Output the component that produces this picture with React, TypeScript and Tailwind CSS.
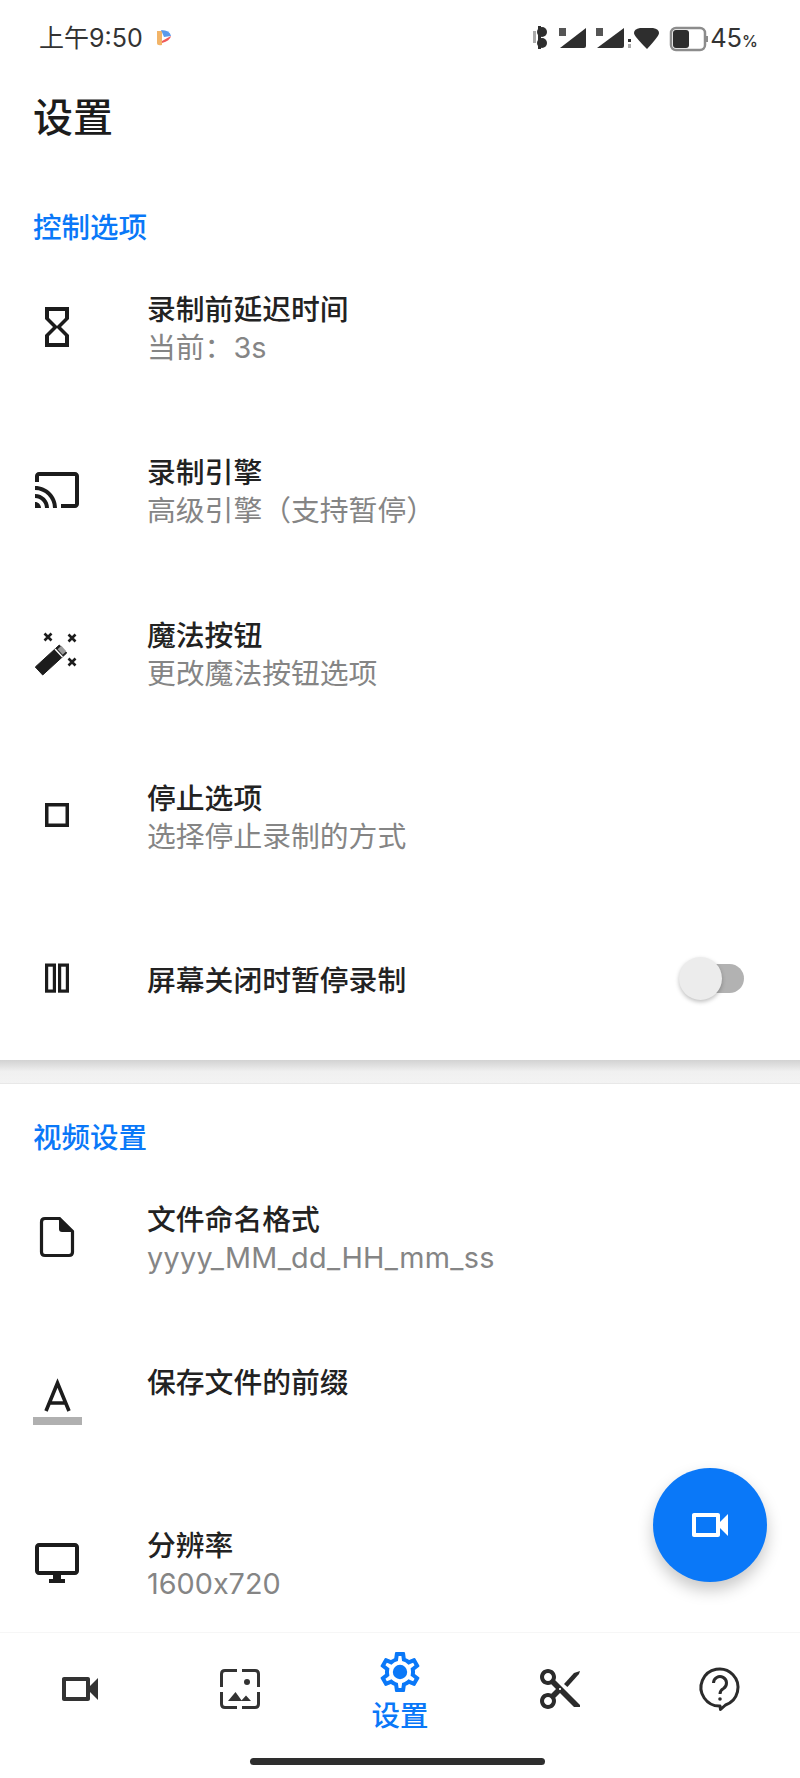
import type { ReactNode } from 'react'

const FONT = 'font-["Inter","Noto_Sans_CJK_SC",sans-serif]'

function Icon({ children, fill = '#1c1c1c' }: { children: ReactNode; fill?: string }) {
    return (
        <svg width="48" height="48" viewBox="0 0 24 24" fill={fill}>
            {children}
        </svg>
    )
}

const VIDEOCAM =
    'M15 8v8H5V8h10m1-2H4c-.55 0-1 .45-1 1v10c0 .55.45 1 1 1h12c.55 0 1-.45 1-1v-3.5l4 4v-11l-4 4V7c0-.55-.45-1-1-1z'

const HourglassIcon = () => (
    <Icon>
        <path d="M6 2v6h.01L6 8.01 10 12l-4 4 .01.01H6V22h12v-5.99h-.01L18 16l-4-4 4-3.99-.01-.01H18V2H6zm10 14.5V20H8v-3.5l4-4 4 4zm-4-5l-4-4V4h8v3.5l-4 4z" />
    </Icon>
)

const CastIcon = () => (
    <Icon>
        <path d="M21 3H3c-1.1 0-2 .9-2 2v3h2V5h18v14h-7v2h7c1.1 0 2-.9 2-2V5c0-1.1-.9-2-2-2zM1 18v3h3c0-1.66-1.34-3-3-3zm0-4v2c2.76 0 5 2.24 5 5h2c0-3.87-3.13-7-7-7zm0-4v2c4.97 0 9 4.03 9 9h2c0-6.08-4.93-11-11-11z" />
    </Icon>
)

const WandIcon = () => (
    <svg width="48" height="48" viewBox="0 0 48 48" fill="none">
        <path d="M2.3 38 L26.3 16 L33.7 24 L9.7 46 Z" fill="#1c1c1c" stroke="#1c1c1c" strokeWidth="1" strokeLinejoin="round" />
        <path d="M22 20 L29.5 28" stroke="#fff" strokeWidth="1.4" />
        <path d="M26.5 18.5 L31.5 24" stroke="#999" strokeWidth="5" />
        <g stroke="#1c1c1c" strokeWidth="2.6">
            <path d="M11.5 4.5 L18.5 11.5 M18.5 4.5 L11.5 11.5" />
            <path d="M35.5 5.5 L42.5 12.5 M42.5 5.5 L35.5 12.5" />
            <path d="M35.5 29.5 L42.5 36.5 M42.5 29.5 L35.5 36.5" />
        </g>
    </svg>
)

const StopIcon = () => (
    <svg width="48" height="48" viewBox="0 0 48 48" fill="none">
        <rect x="13.75" y="12.75" width="20.5" height="20.5" stroke="#1c1c1c" strokeWidth="3.5" />
    </svg>
)

const PauseIcon = () => (
    <svg width="48" height="48" viewBox="0 0 48 48" fill="none" stroke="#1c1c1c" strokeWidth="3.2">
        <rect x="13.6" y="10.1" width="7.8" height="26" />
        <rect x="26.6" y="10.1" width="7.8" height="26" />
    </svg>
)

const FileIcon = () => (
    <svg width="48" height="48" viewBox="0 0 48 48" fill="none">
        <path d="M12 5.5 H26.5 L39.5 18.5 V39 Q39.5 42.5 36 42.5 H12 Q8.5 42.5 8.5 39 V9 Q8.5 5.5 12 5.5 Z" stroke="#1c1c1c" strokeWidth="3.2" />
        <path d="M26 5 L40 19 H29 Q26 19 26 16 Z" fill="#1c1c1c" />
    </svg>
)

const LetterIcon = () => (
    <svg width="48" height="48" viewBox="0 0 48 48" fill="none" className="overflow-visible">
        <path d="M13 35 L24.5 7 L36 35 M17 27 H32" stroke="#1c1c1c" strokeWidth="3.6" />
        <rect x="0" y="41" width="49" height="8" fill="#b0b0b0" />
    </svg>
)

const DesktopIcon = () => (
    <Icon>
        <path d="M21 2H3c-1.1 0-2 .9-2 2v12c0 1.1.9 2 2 2h7v2H8v2h8v-2h-2v-2h7c1.1 0 2-.9 2-2V4c0-1.1-.9-2-2-2zm0 14H3V4h18v12z" />
    </Icon>
)

const GalleryIcon = () => (
    <svg width="48" height="48" viewBox="0 0 48 48" fill="none">
        <path
            d="M21 5.5 H9 Q5.5 5.5 5.5 9 V22 M26 5.5 H39 Q42.5 5.5 42.5 9 V22 M5.5 27 V39 Q5.5 42.5 9 42.5 H21 M42.5 27 V39 Q42.5 42.5 39 42.5 H26"
            stroke="#333"
            strokeWidth="3"
        />
        <circle cx="31" cy="17" r="3" fill="#333" />
        <path d="M12 36 L19.5 27 L26 36 Z M25 36 L30 30.5 L35 36 Z" fill="#333" />
    </svg>
)

const GearIcon = () => (
    <Icon fill="#0a78f8">
        <path d="M19.43 12.98c.04-.32.07-.64.07-.98 0-.34-.03-.66-.07-.98l2.11-1.65c.19-.15.24-.42.12-.64l-2-3.46c-.09-.16-.26-.25-.44-.25-.06 0-.12.01-.17.03l-2.49 1c-.52-.4-1.08-.73-1.69-.98l-.38-2.65C14.46 2.18 14.25 2 14 2h-4c-.25 0-.46.18-.49.42l-.38 2.65c-.61.25-1.17.59-1.69.98l-2.49-1c-.06-.02-.12-.03-.18-.03-.17 0-.34.09-.43.25l-2 3.46c-.13.22-.07.49.12.64l2.11 1.65c-.04.32-.07.65-.07.98 0 .33.03.66.07.98l-2.11 1.65c-.19.15-.24.42-.12.64l2 3.46c.09.16.26.25.44.25.06 0 .12-.01.17-.03l2.49-1c.52.4 1.08.73 1.69.98l.38 2.65c.03.24.24.42.49.42h4c.25 0 .46-.18.49-.42l.38-2.65c.61-.25 1.17-.59 1.69-.98l2.49 1c.06.02.12.03.18.03.17 0 .34-.09.43-.25l2-3.46c.12-.22.07-.49-.12-.64l-2.11-1.65zm-1.98-1.71c.04.31.05.52.05.73 0 .21-.02.43-.05.73l-.14 1.13.89.7 1.08.84-.7 1.21-1.27-.51-1.04-.42-.9.68c-.43.32-.84.56-1.25.73l-1.06.43-.16 1.13-.2 1.35h-1.4l-.19-1.35-.16-1.13-1.06-.43c-.43-.18-.83-.41-1.23-.71l-.91-.7-1.06.43-1.27.51-.7-1.21 1.08-.84.89-.7-.14-1.13c-.03-.31-.05-.54-.05-.74s.02-.43.05-.73l.14-1.13-.89-.7-1.08-.84.7-1.21 1.27.51 1.04.42.9-.68c.43-.32.84-.56 1.25-.73l1.06-.43.16-1.13.2-1.35h1.39l.19 1.35.16 1.13 1.06.43c.43.18.83.41 1.23.71l.91.7 1.06-.43 1.27-.51.7 1.21-1.07.85-.89.7.14 1.13z" />
        <circle cx="12" cy="12" r="3.6" />
    </Icon>
)

const ScissorsIcon = () => (
    <Icon fill="#2b2b2b">
        <path d="M9.64 7.64c.23-.5.36-1.05.36-1.64 0-2.21-1.79-4-4-4S2 3.79 2 6s1.79 4 4 4c.59 0 1.14-.13 1.64-.36L10 12l-2.36 2.36C7.14 14.13 6.59 14 6 14c-2.21 0-4 1.79-4 4s1.79 4 4 4 4-1.79 4-4c0-.59-.13-1.14-.36-1.64L12 14l7 7h3v-1L9.64 7.64zM6 8c-1.1 0-2-.89-2-2s.9-2 2-2 2 .89 2 2-.9 2-2 2zm0 12c-1.1 0-2-.89-2-2s.9-2 2-2 2 .89 2 2-.9 2-2 2zm6-7.5c-.28 0-.5-.22-.5-.5s.22-.5.5-.5.5.22.5.5-.22.5-.5.5z" />
        <path d="M14 9.5l5-5.5 3-1-.5 1.5-5.8 6.5z" />
    </Icon>
)

const HelpIcon = () => (
    <svg width="48" height="48" viewBox="0 0 48 48" fill="none" stroke="#2b2b2b" strokeWidth="3">
        <path d="M24 41 A18.5 18.5 0 1 1 29.5 40 L24.5 44.5 Z" strokeLinejoin="round" />
        <path d="M17.5 18 A6.5 6.5 0 1 1 27.5 23.5 Q24 25.5 24 29" strokeWidth="3" />
        <circle cx="24" cy="34" r="1.8" fill="#2b2b2b" stroke="none" />
    </svg>
)

function StatusIcons() {
    return (
        <svg width="176" height="30" viewBox="0 0 176 30">
            <g fill="#2e2e2e">
                <rect x="1" y="8" width="3" height="12" fill="#aaa" />
                <rect x="6" y="3" width="3" height="23" />
                <circle cx="10" cy="9" r="5" />
                <circle cx="10" cy="20" r="5" />
                <path d="M28 25 L54 5 V23 Q54 25 52 25 Z" />
                <rect x="27" y="5" width="7" height="8" fill="#555" />
                <path d="M65 25 L92 5 V23 Q92 25 90 25 Z" />
                <rect x="64" y="5" width="7" height="8" fill="#555" />
                <rect x="96" y="16" width="3" height="3" />
                <rect x="96" y="21" width="3" height="4" fill="#aaa" />
                <path d="M102 10 Q102 6 108 5 H121 Q127 6 127 10 Q127 13 115 26 Q102 13 102 10 Z" />
                <rect x="139" y="5" width="34" height="22" rx="5" fill="none" stroke="#8c8c8c" strokeWidth="2.5" />
                <rect x="141" y="7" width="16" height="18" rx="3" />
                <rect x="174" y="13" width="2" height="6" fill="#8c8c8c" />
            </g>
        </svg>
    )
}

function AppDot() {
    return (
        <svg width="16" height="18" viewBox="0 0 16 18">
            <path d="M1 2 H6 V16 Q1 17 1 14 Z" fill="#f2b468" />
            <path d="M5 1 Q14 1 15 7 L8 8 Z" fill="#5b9bec" />
            <path d="M6 12 L15 7 Q14 12 6 14 Z" fill="#ef5a5a" />
        </svg>
    )
}

function SectionTitle({ children, className }: { children: ReactNode; className: string }) {
    return (
        <div className={`flex items-end px-[33px] ${className}`}>
            <span className="text-[28.5px] leading-[34px] font-medium text-[#0a78f8]">{children}</span>
        </div>
    )
}

function Row({
    icon,
    title,
    summary,
    summaryClass = '',
    right,
}: {
    icon: ReactNode
    title: string
    summary?: string
    summaryClass?: string
    right?: ReactNode
}) {
    return (
        <div className="flex h-[163px] shrink-0 items-center pl-[33px]">
            <div className="flex w-[114px] shrink-0">{icon}</div>
            <div className="flex-1 pt-[4px]">
                <div className="text-[28.8px] leading-[38px] font-medium text-[#222]">{title}</div>
                {summary !== undefined && (
                    <div
                        className={`h-[38px] text-[28.8px] leading-[38px] text-[#858585] [font-feature-settings:"calt"_0] ${summaryClass}`}
                    >
                        {summary}
                    </div>
                )}
            </div>
            {right}
        </div>
    )
}

function Toggle() {
    return (
        <div className="relative mr-[56px] h-[29px] w-[54px] rounded-full bg-[#b2b2b2]">
            <div className="absolute top-[-7px] left-[-11px] h-[43px] w-[43px] rounded-full bg-[#ececec] shadow-[0_2px_4px_rgba(0,0,0,0.25)]" />
        </div>
    )
}

export default function App() {
    return (
        <div className={`relative flex h-[1778px] w-[800px] flex-col overflow-hidden bg-white ${FONT}`}>
            <div className="flex h-[76px] shrink-0 items-center justify-between pr-[42px] pl-[39px]">
                <div className="flex items-center gap-[13px] text-[25px] text-[#333]">
                    <span className="mt-[2px]">上午9:50</span>
                    <AppDot />
                </div>
                <div className="flex items-center gap-[2px]">
                    <StatusIcons />
                    <span className="text-[25.5px] text-[#333]">
                        45<span className="text-[16px] font-medium">%</span>
                    </span>
                </div>
            </div>

            <div className="flex-1 overflow-hidden">
                <div className="flex h-[84px] items-center px-[33px] text-[40px] font-medium text-[#1c1c1c]">
                    设置
                </div>
                <SectionTitle className="h-[85px]">控制选项</SectionTitle>
                <Row icon={<HourglassIcon />} title="录制前延迟时间" summary="当前：3s" />
                <Row icon={<CastIcon />} title="录制引擎" summary="高级引擎（支持暂停）" />
                <Row icon={<WandIcon />} title="魔法按钮" summary="更改魔法按钮选项" />
                <Row icon={<StopIcon />} title="停止选项" summary="选择停止录制的方式" />
                <Row icon={<PauseIcon />} title="屏幕关闭时暂停录制" right={<Toggle />} />

                <div className="h-[24px] border-b border-[#e8e8e8] bg-gradient-to-b from-[#d2d2d2] via-[#f0f0f0] to-[#f3f3f3]" />

                <SectionTitle className="h-[71px]">视频设置</SectionTitle>
                <Row
                    icon={<FileIcon />}
                    title="文件命名格式"
                    summary="yyyy_MM_dd_HH_mm_ss"
                    summaryClass="tracking-[0.3px]"
                />
                <Row icon={<LetterIcon />} title="保存文件的前缀" summary="" />
                <Row icon={<DesktopIcon />} title="分辨率" summary="1600x720" />
            </div>

            <div className="flex h-[146px] shrink-0 flex-col border-t border-[#f6f6f6] bg-white">
                <div className="grid h-[125px] grid-cols-5">
                    <div className="flex items-center justify-center pb-[14px]">
                        <Icon fill="#333">
                            <path d={VIDEOCAM} />
                        </Icon>
                    </div>
                    <div className="flex items-center justify-center pb-[14px]">
                        <GalleryIcon />
                    </div>
                    <div className="flex flex-col items-center pt-[15px]">
                        <GearIcon />
                        <span className="text-[28.5px] leading-[40px] font-medium text-[#0a78f8]">设置</span>
                    </div>
                    <div className="flex items-center justify-center pb-[14px]">
                        <ScissorsIcon />
                    </div>
                    <div className="flex items-center justify-center pb-[14px]">
                        <HelpIcon />
                    </div>
                </div>
                <div className="flex justify-center pr-[6px]">
                    <div className="h-[7px] w-[295px] rounded-full bg-[#2e2e2e]" />
                </div>
            </div>

            <button className="absolute top-[1468px] left-[653px] flex h-[114px] w-[114px] items-center justify-center rounded-full bg-[#0a78f8] shadow-[0_8px_16px_rgba(0,0,0,0.22)]">
                <Icon fill="#fff">
                    <path d={VIDEOCAM} />
                </Icon>
            </button>
        </div>
    )
}
